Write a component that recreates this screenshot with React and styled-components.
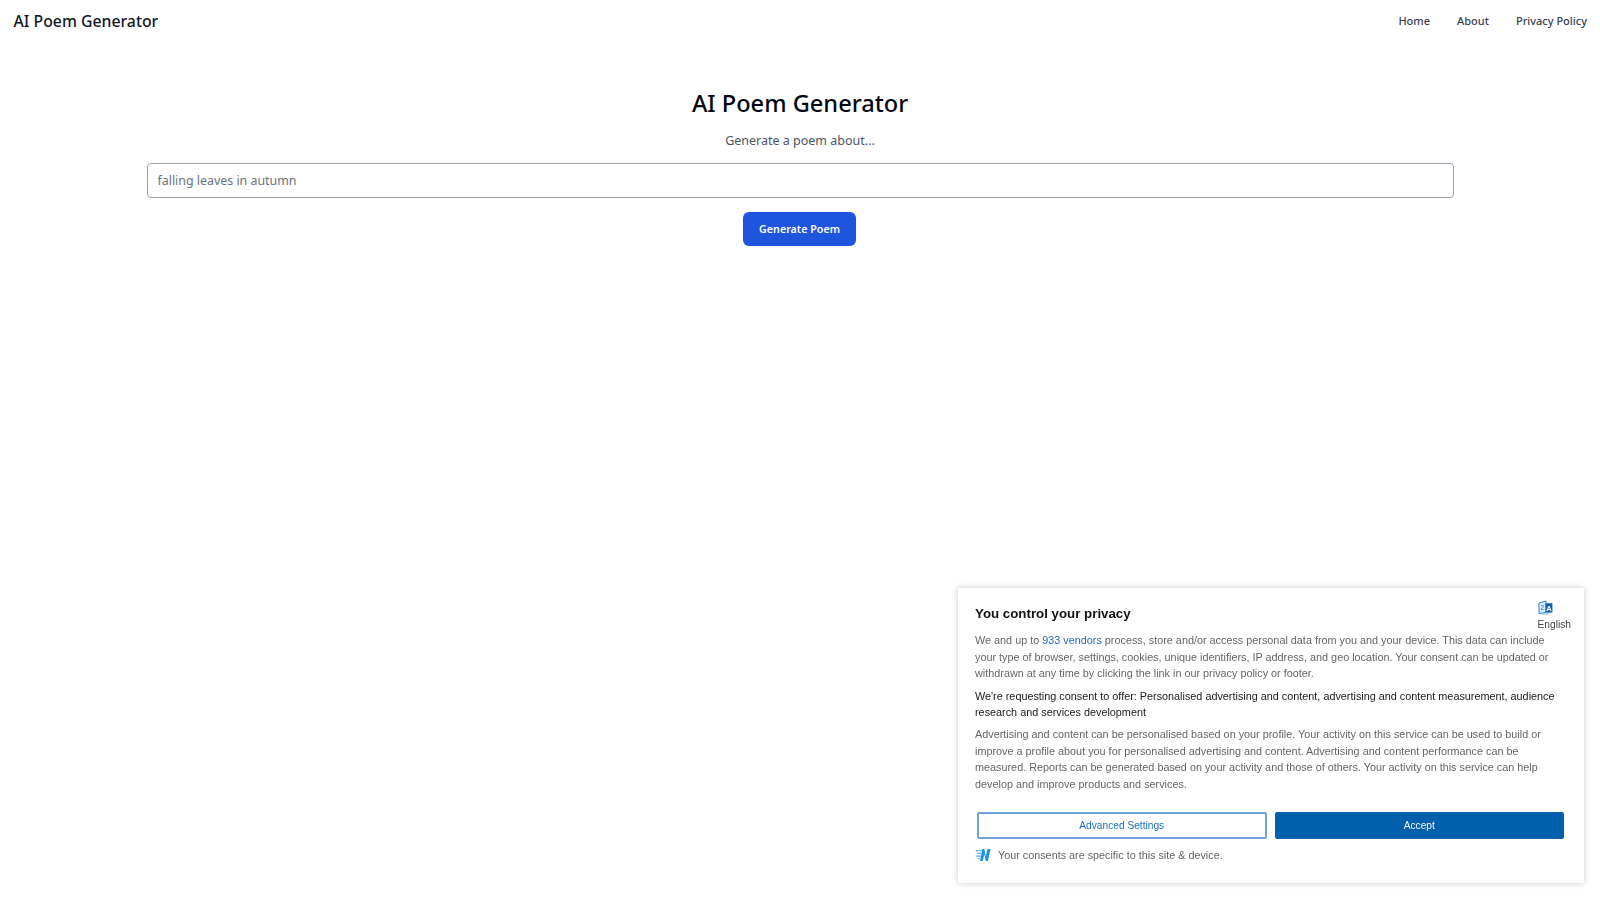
import React from 'react';
import styled, { createGlobalStyle } from 'styled-components';

const GlobalStyle = createGlobalStyle`
    html, body {
        margin: 0;
        padding: 0;
        background: #fff;
        font-family: "Noto Sans", "Open Sans", sans-serif;
    }
    * {
        box-sizing: border-box;
    }
`;

const Page = styled.div`
    min-height: 900px;
    background: #fff;
`;

const Navbar = styled.nav`
    display: flex;
    justify-content: space-between;
    align-items: center;
    height: 41px;
    padding: 0 13px 0 13.5px;
`;

const Brand = styled.a`
    font-size: 15.8px;
    font-weight: 500;
    color: #111827;
`;

const NavLinks = styled.div`
    display: flex;
    gap: 27px;
    margin-top: -1px;
`;

const NavLink = styled.a`
    font-size: 11px;
    font-weight: 500;
    color: #374151;
`;

const Main = styled.main`
    display: flex;
    flex-direction: column;
    align-items: center;
    padding: 46px 146.5px 0;
`;

const Title = styled.h1`
    margin: 0;
    font-size: 23.6px;
    line-height: 32px;
    font-weight: 500;
    color: #030712;
`;

const Subtitle = styled.p`
    margin: 12px 0 0;
    font-size: 12.5px;
    line-height: 20px;
    color: #4b5563;
`;

const PoemInput = styled.input`
    width: 100%;
    height: 35px;
    margin-top: 12px;
    padding: 0 10px;
    border: 1px solid #9ca3af;
    border-radius: 4px;
    font-family: inherit;
    font-size: 12.4px;
    color: #374151;
    outline: none;

    &::placeholder {
        color: #6b7280;
    }
`;

const GenerateButton = styled.button`
    width: 113px;
    height: 34px;
    margin-top: 14px;
    margin-left: -1px;
    border: none;
    border-radius: 6px;
    background: #1d55de;
    color: #fff;
    font-family: inherit;
    font-size: 10.7px;
    font-weight: 600;
    cursor: pointer;
`;

const ConsentCard = styled.section`
    position: fixed;
    left: 958px;
    top: 588px;
    width: 626px;
    height: 295px;
    padding: 17px 20px 0 17px;
    background: #fff;
    box-shadow: 0 0 6px rgba(0, 0, 0, 0.22);
    font-family: "Liberation Sans", Arial, sans-serif;
`;

const ConsentHeading = styled.h2`
    margin: 0;
    font-size: 13.3px;
    line-height: 18px;
    font-weight: 700;
    color: #111;
`;

const LanguagePicker = styled.div`
    position: absolute;
    top: 12px;
    right: 13px;
    display: flex;
    flex-direction: column;
    align-items: center;
    gap: 4px;
    font-size: 10.2px;
    line-height: 12px;
    color: #444;

    svg {
        margin-right: 18px;
    }
`;

const ConsentText = styled.p`
    margin: ${(props) => props.$top}px 0 0;
    font-size: 10.84px;
    line-height: 16.6px;
    color: ${(props) => (props.$dark ? '#1a1a1a' : '#666')};
`;

const VendorLink = styled.a`
    color: #1a6fc0;
`;

const ConsentActions = styled.div`
    display: grid;
    grid-template-columns: 1fr 1fr;
    gap: 8px;
    margin: 20px 0 0 2px;
`;

const ConsentButton = styled.button`
    height: 27px;
    border: ${(props) => (props.$primary ? '1px solid #0f61b0' : '2px solid #6ea3d8')};
    border-radius: 2px;
    background: ${(props) => (props.$primary ? '#0060ae' : '#fff')};
    color: ${(props) => (props.$primary ? '#f2f7fc' : '#1a6fc0')};
    font-family: inherit;
    font-size: 10.2px;
    cursor: pointer;
`;

const ConsentFooter = styled.div`
    display: flex;
    align-items: center;
    gap: 7px;
    margin-top: 8px;
    font-size: 10.8px;
    line-height: 16px;
    color: #666;
`;

const LanguageIcon = () => (
    <svg width="15" height="15" viewBox="0 0 15 15">
        <path d="M1 3 L8 1 V12.5 L1 13.5 Z" fill="#d8ecfb" stroke="#2a86d2" strokeWidth="1" />
        <path d="M7.5 3.2 H14.4 V12.6 H7.5 Z" fill="#0d62b5" />
        <path d="M4 14 Q8 14.8 11 13.4" fill="none" stroke="#6fb3e8" strokeWidth="0.9" />
        <text x="11" y="10.8" fontSize="7.5" fontWeight="700" fontFamily="Liberation Sans" textAnchor="middle" fill="#fff">A</text>
        <text x="4.4" y="10" fontSize="6.5" fontFamily="Liberation Sans" textAnchor="middle" fill="#1a78c8">2</text>
    </svg>
);

const SiteLogo = () => (
    <svg width="16" height="14" viewBox="0 0 16 14">
        <path d="M5 13 L7.4 1 H9.4 L10.6 8.6 L12.6 1 H15.6 L12.8 13 H10.8 L9.4 6.4 L7.6 13 Z" fill="#1c8fe8" />
        <path d="M0.8 2 H7 V3.3 H0.8 Z M2.4 4.7 H6.6 V6 H2.4 Z M0.8 7.4 H6 V8.7 H0.8 Z M3.4 10 H5.4 V11.2 H3.4 Z" fill="#5ab8f2" />
    </svg>
);

const App = () => {
    return (
        <Page>
            <GlobalStyle />
            <Navbar>
                <Brand>AI Poem Generator</Brand>
                <NavLinks>
                    <NavLink>Home</NavLink>
                    <NavLink>About</NavLink>
                    <NavLink>Privacy Policy</NavLink>
                </NavLinks>
            </Navbar>
            <Main>
                <Title>AI Poem Generator</Title>
                <Subtitle>Generate a poem about...</Subtitle>
                <PoemInput placeholder="falling leaves in autumn" />
                <GenerateButton>Generate Poem</GenerateButton>
            </Main>
            <ConsentCard>
                <ConsentHeading>You control your privacy</ConsentHeading>
                <LanguagePicker>
                    <LanguageIcon />
                    English
                </LanguagePicker>
                <ConsentText $top={9}>
                    We and up to <VendorLink>933 vendors</VendorLink> process, store and/or access personal data from you and your device. This data can include your type of browser, settings, cookies, unique identifiers, IP address, and geo location. Your consent can be updated or withdrawn at any time by clicking the link in our privacy policy or footer.
                </ConsentText>
                <ConsentText $top={6} $dark>
                    We're requesting consent to offer: Personalised advertising and content, advertising and content measurement, audience research and services development
                </ConsentText>
                <ConsentText $top={5}>
                    Advertising and content can be personalised based on your profile. Your activity on this service can be used to build or improve a profile about you for personalised advertising and content. Advertising and content performance can be measured. Reports can be generated based on your activity and those of others. Your activity on this service can help develop and improve products and services.
                </ConsentText>
                <ConsentActions>
                    <ConsentButton>Advanced Settings</ConsentButton>
                    <ConsentButton $primary>Accept</ConsentButton>
                </ConsentActions>
                <ConsentFooter>
                    <SiteLogo />
                    Your consents are specific to this site &amp; device.
                </ConsentFooter>
            </ConsentCard>
        </Page>
    );
};

export default App;
